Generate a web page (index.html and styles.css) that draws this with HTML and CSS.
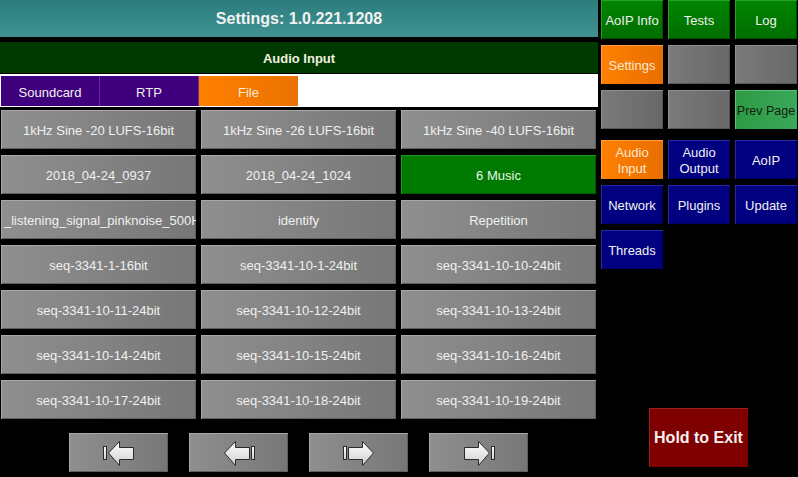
FILE: index.html
```html
<!DOCTYPE html>
<html>
<head>
<meta charset="utf-8">
<link rel="stylesheet" href="styles.css">
</head>
<body>
<div class="main">
  <div class="header">Settings: 1.0.221.1208</div>
  <div class="section-title">Audio Input</div>
  <div class="tabs">
    <div class="tab tab-purple">Soundcard</div>
    <div class="tab tab-purple">RTP</div>
    <div class="tab tab-orange">File</div>
  </div>
  <div class="files">
    <div class="btn grey">1kHz Sine -20 LUFS-16bit</div>
    <div class="btn grey">1kHz Sine -26 LUFS-16bit</div>
    <div class="btn grey">1kHz Sine -40 LUFS-16bit</div>
    <div class="btn grey">2018_04-24_0937</div>
    <div class="btn grey">2018_04-24_1024</div>
    <div class="btn green">6 Music</div>
    <div class="btn grey clip"><span>_listening_signal_pinknoise_500Hz</span></div>
    <div class="btn grey">identify</div>
    <div class="btn grey">Repetition</div>
    <div class="btn grey">seq-3341-1-16bit</div>
    <div class="btn grey">seq-3341-10-1-24bit</div>
    <div class="btn grey">seq-3341-10-10-24bit</div>
    <div class="btn grey">seq-3341-10-11-24bit</div>
    <div class="btn grey">seq-3341-10-12-24bit</div>
    <div class="btn grey">seq-3341-10-13-24bit</div>
    <div class="btn grey">seq-3341-10-14-24bit</div>
    <div class="btn grey">seq-3341-10-15-24bit</div>
    <div class="btn grey">seq-3341-10-16-24bit</div>
    <div class="btn grey">seq-3341-10-17-24bit</div>
    <div class="btn grey">seq-3341-10-18-24bit</div>
    <div class="btn grey">seq-3341-10-19-24bit</div>
  </div>
  <div class="nav">
    <div class="btn grey navbtn">
      <svg width="34" height="30" viewBox="0 0 34 30"><defs><linearGradient id="ga" x1="0" y1="0" x2="0" y2="1"><stop offset="0" stop-color="#ffffff"/><stop offset="1" stop-color="#cfcfcf"/></linearGradient></defs><rect x="1.5" y="8.5" width="3" height="13" fill="url(#ga)" stroke="#2a2a2a"/><polygon points="6.5,15 17.5,3.5 17.5,9.5 31.5,9.5 31.5,21.5 17.5,21.5 17.5,27.5" fill="url(#ga)" stroke="#2a2a2a" stroke-linejoin="round"/></svg>
    </div>
    <div class="btn grey navbtn">
      <svg width="34" height="30" viewBox="0 0 34 30"><defs><linearGradient id="gb" x1="0" y1="0" x2="0" y2="1"><stop offset="0" stop-color="#ffffff"/><stop offset="1" stop-color="#cfcfcf"/></linearGradient></defs><polygon points="2.5,15 13.5,3.5 13.5,9.5 27.5,9.5 27.5,21.5 13.5,21.5 13.5,27.5" fill="url(#gb)" stroke="#2a2a2a" stroke-linejoin="round"/><rect x="29.5" y="8.5" width="3" height="13" fill="url(#gb)" stroke="#2a2a2a"/></svg>
    </div>
    <div class="btn grey navbtn">
      <svg width="34" height="30" viewBox="0 0 34 30"><defs><linearGradient id="gc" x1="0" y1="0" x2="0" y2="1"><stop offset="0" stop-color="#ffffff"/><stop offset="1" stop-color="#cfcfcf"/></linearGradient></defs><rect x="1.5" y="8.5" width="3" height="13" fill="url(#gc)" stroke="#2a2a2a"/><polygon points="31.5,15 20.5,3.5 20.5,9.5 6.5,9.5 6.5,21.5 20.5,21.5 20.5,27.5" fill="url(#gc)" stroke="#2a2a2a" stroke-linejoin="round"/></svg>
    </div>
    <div class="btn grey navbtn">
      <svg width="34" height="30" viewBox="0 0 34 30"><defs><linearGradient id="gd" x1="0" y1="0" x2="0" y2="1"><stop offset="0" stop-color="#ffffff"/><stop offset="1" stop-color="#cfcfcf"/></linearGradient></defs><polygon points="27.5,15 16.5,3.5 16.5,9.5 2.5,9.5 2.5,21.5 16.5,21.5 16.5,27.5" fill="url(#gd)" stroke="#2a2a2a" stroke-linejoin="round"/><rect x="29.5" y="8.5" width="3" height="13" fill="url(#gd)" stroke="#2a2a2a"/></svg>
    </div>
  </div>
</div>
<div class="side">
  <div class="side-grid">
    <div class="sbtn s-green">AoIP Info</div>
    <div class="sbtn s-green">Tests</div>
    <div class="sbtn s-green">Log</div>
    <div class="sbtn s-orange">Settings</div>
    <div class="sbtn s-grey"></div>
    <div class="sbtn s-grey"></div>
    <div class="sbtn s-grey"></div>
    <div class="sbtn s-grey"></div>
    <div class="sbtn s-light">Prev Page</div>
  </div>
  <div class="side-grid lower">
    <div class="sbtn s-orange">Audio<br>Input</div>
    <div class="sbtn s-navy">Audio<br>Output</div>
    <div class="sbtn s-navy">AoIP</div>
    <div class="sbtn s-navy">Network</div>
    <div class="sbtn s-navy">Plugins</div>
    <div class="sbtn s-navy">Update</div>
    <div class="sbtn s-navy">Threads</div>
  </div>
  <div class="exit">Hold to Exit</div>
</div>
</body>
</html>
```

FILE: styles.css
```css
* { box-sizing: border-box; }
html, body {
  margin: 0;
  padding: 0;
}
body {
  width: 798px;
  height: 477px;
  background: #000;
  display: flex;
  overflow: hidden;
  font-family: "Liberation Sans", Arial, sans-serif;
  font-size: 13px;
  color: #f0f0f0;
}
.main {
  width: 598px;
  display: flex;
  flex-direction: column;
}
.header {
  height: 37px;
  background: linear-gradient(#2c7c7c, #409393);
  color: #f2f2f2;
  font-weight: bold;
  font-size: 16px;
  display: flex;
  align-items: center;
  justify-content: center;
  margin-bottom: 5px;
}
.section-title {
  height: 31px;
  padding-top: 2px;
  background: #013a01;
  color: #f0f0e0;
  font-weight: bold;
  font-size: 13px;
  display: flex;
  align-items: center;
  justify-content: center;
}
.tabs {
  margin-top: 1px;
  height: 34px;
  background: #fff;
  display: flex;
  padding: 2px 1px 2px 1px;
  border-bottom: 1px solid #000;
}
.tab {
  width: 99px;
  height: 30px;
  padding-top: 2px;
  display: flex;
  align-items: center;
  justify-content: center;
  color: #f0f0f0;
}
.tab-purple {
  background: #3f007e;
  border-right: 1px solid #6a2aa8;
}
.tab-orange {
  background: linear-gradient(90deg, #ff8000, #ec7200);
  color: #fbead8;
}
.files {
  margin-top: 2px;
  padding-left: 1px;
  display: grid;
  grid-template-columns: repeat(3, 195px);
  grid-auto-rows: 39px;
  column-gap: 5px;
  row-gap: 6px;
}
.btn {
  display: flex;
  align-items: center;
  justify-content: center;
  padding-top: 2px;
  white-space: nowrap;
  overflow: hidden;
  color: #f0f0f0;
}
.grey {
  background: linear-gradient(90deg, #8f8f8f, #777777);
  box-shadow: inset 1px 1px 0 #a8a8a8, inset -1px -1px 0 #5e5e5e;
}
.green {
  background: #007a00;
  box-shadow: inset 1px 1px 0 #1f9a1f, inset -1px -1px 0 #005a00;
  color: #e8f4e8;
}
.clip {
  justify-content: flex-start;
  padding-left: 3px;
}
.nav {
  margin-top: 14px;
  padding-left: 69px;
  display: flex;
  gap: 21px;
}
.navbtn {
  width: 99px;
  height: 39px;
  padding-top: 0;
}
.side {
  width: 200px;
  display: flex;
  flex-direction: column;
  padding-left: 3px;
}
.side-grid {
  display: grid;
  grid-template-columns: repeat(3, 62px);
  grid-auto-rows: 39px;
  column-gap: 5px;
  row-gap: 6px;
}
.side-grid.lower {
  margin-top: 11px;
}
.sbtn {
  display: flex;
  align-items: center;
  justify-content: center;
  padding-top: 2px;
  text-align: center;
  line-height: 16px;
  color: #f0f0f0;
  white-space: nowrap;
}
.s-green {
  background: linear-gradient(#008400, #006e00);
  box-shadow: inset 1px 1px 0 #2aa02a, inset -1px -1px 0 #005000;
}
.s-orange {
  background: linear-gradient(90deg, #ff8000, #e86e00);
  box-shadow: inset 1px 1px 0 #ffa040;
  color: #fbe8d4;
}
.s-grey {
  background: linear-gradient(90deg, #7a7a7a, #686868);
  box-shadow: inset 1px 1px 0 #909090, inset -1px -1px 0 #555;
}
.s-light {
  background: linear-gradient(90deg, #2f9a45, #3aa85a);
  box-shadow: inset 1px 1px 0 #5cc07a;
  color: #102010;
  font-size: 12.5px;
}
.s-navy {
  background: #000080;
  box-shadow: inset 1px 1px 0 #2a2aa8, inset -1px -1px 0 #000060;
}
.exit {
  margin-top: auto;
  margin-bottom: 10px;
  margin-left: 48px;
  width: 99px;
  height: 59px;
  background: #7e0000;
  box-shadow: inset 1px 1px 0 #9a2020;
  color: #f4eeee;
  font-weight: bold;
  font-size: 16px;
  display: flex;
  align-items: center;
  justify-content: center;
}
```
